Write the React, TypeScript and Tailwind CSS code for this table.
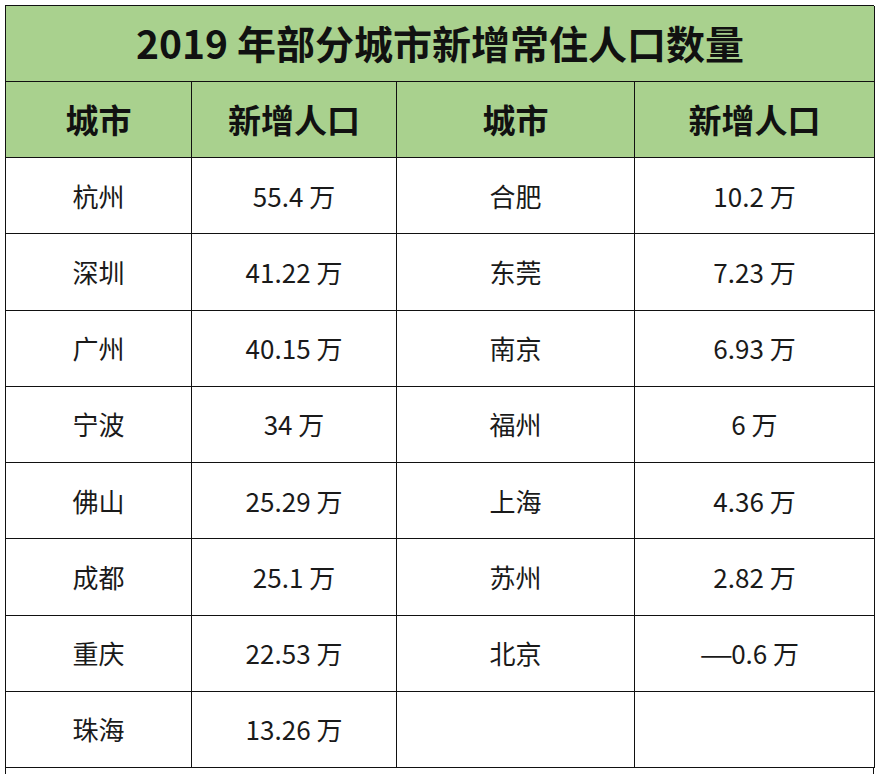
import React from "react";

const rows: [string, string, string, string][] = [
  ["杭州", "55.4 万", "合肥", "10.2 万"],
  ["深圳", "41.22 万", "东莞", "7.23 万"],
  ["广州", "40.15 万", "南京", "6.93 万"],
  ["宁波", "34 万", "福州", "6 万"],
  ["佛山", "25.29 万", "上海", "4.36 万"],
  ["成都", "25.1 万", "苏州", "2.82 万"],
  ["重庆", "22.53 万", "北京", "—0.6 万"],
  ["珠海", "13.26 万", "", ""],
];

const font = { fontFamily: '"Noto Sans CJK SC", "Noto Sans", sans-serif' };

function Cell({ text }: { text: string }) {
  if (text.startsWith("—")) {
    return (
      <span>
        <span className="inline-block scale-x-[1.45] origin-right -mr-[2px]">—</span>
        {text.slice(1)}
      </span>
    );
  }
  return <span>{text}</span>;
}

export default function App() {
  return (
    <div className="w-[881px] h-[774px] bg-white overflow-hidden pl-[5px] pt-[5px]" style={font}>
      <div className="w-[869px] grid grid-cols-[186px_205px_238px_240px] grid-rows-[76px_76px_repeat(8,1fr)] h-[763px] border-l border-t border-[#111]">
        <div className="col-span-4 bg-[#a9d18e] border-r border-b border-[#111] flex items-center justify-center text-[39px] font-bold text-[#111] leading-none pb-[2px]">
          2019 年部分城市新增常住人口数量
        </div>
        {["城市", "新增人口", "城市", "新增人口"].map((h, i) => (
          <div
            key={i}
            className="bg-[#a9d18e] border-r border-b border-[#111] flex items-center justify-center text-[33px] font-bold text-[#111] leading-none"
          >
            {h}
          </div>
        ))}
        {rows.map((r, ri) =>
          r.map((c, ci) => (
            <div
              key={`${ri}-${ci}`}
              className="border-r border-b border-[#111] flex items-center justify-center text-[26px] text-[#1a1a1a] leading-none"
            >
              <Cell text={c} />
            </div>
          ))
        )}
      </div>
      <div className="w-[869px] h-[10px] border-l border-r border-[#111]" />
    </div>
  );
}
